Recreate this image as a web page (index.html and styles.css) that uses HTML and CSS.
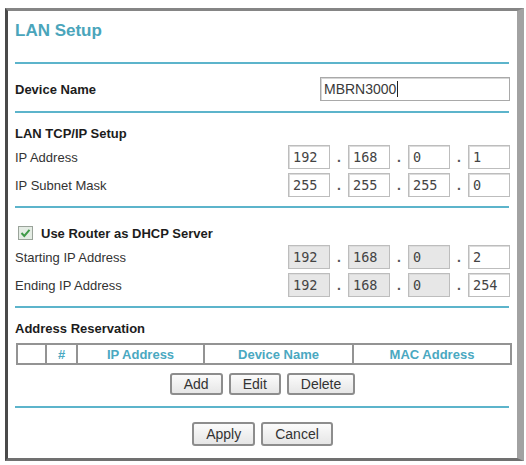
FILE: index.html
```html
<!DOCTYPE html>
<html>
<head>
<meta charset="utf-8">
<link rel="stylesheet" href="styles.css">
</head>
<body>
<div class="frame">
  <div class="title">LAN Setup</div>
  <div class="rule"></div>
  <div class="row device">
    <span class="bold">Device Name</span>
    <div class="textbox">MBRN3000<span class="caret"></span></div>
  </div>
  <div class="rule"></div>
  <div class="row head"><span class="bold">LAN TCP/IP Setup</span></div>
  <div class="row ip">
    <span class="label">IP Address</span>
    <div class="ipgroup">
      <span class="oct">192</span><span class="dot">.</span><span class="oct">168</span><span class="dot">.</span><span class="oct">0</span><span class="dot">.</span><span class="oct">1</span>
    </div>
  </div>
  <div class="row ip second">
    <span class="label">IP Subnet Mask</span>
    <div class="ipgroup">
      <span class="oct">255</span><span class="dot">.</span><span class="oct">255</span><span class="dot">.</span><span class="oct">255</span><span class="dot">.</span><span class="oct">0</span>
    </div>
  </div>
  <div class="rule r3"></div>
  <div class="row check">
    <svg class="cb" width="15" height="14" viewBox="0 0 15 14"><rect x="0.5" y="0.5" width="14" height="13" fill="#e4ece4" stroke="#9aa39a"/><path d="M3.5 7 L6.3 10 L11.5 3.8" fill="none" stroke="#3f9a48" stroke-width="2"/></svg>
    <span class="bold">Use Router as DHCP Server</span>
  </div>
  <div class="row ip">
    <span class="label">Starting IP Address</span>
    <div class="ipgroup">
      <span class="oct dis">192</span><span class="dot">.</span><span class="oct dis">168</span><span class="dot">.</span><span class="oct dis">0</span><span class="dot">.</span><span class="oct">2</span>
    </div>
  </div>
  <div class="row ip second">
    <span class="label">Ending IP Address</span>
    <div class="ipgroup">
      <span class="oct dis">192</span><span class="dot">.</span><span class="oct dis">168</span><span class="dot">.</span><span class="oct dis">0</span><span class="dot">.</span><span class="oct">254</span>
    </div>
  </div>
  <div class="rule r4"></div>
  <div class="row head2"><span class="bold">Address Reservation</span></div>
  <table class="res">
    <colgroup><col class="c0"><col class="c1"><col class="c2"><col class="c3"><col class="c4"></colgroup>
    <tr><th></th><th>#</th><th>IP Address</th><th>Device Name</th><th>MAC Address</th></tr>
  </table>
  <div class="btns small">
    <button class="btn">Add</button><button class="btn">Edit</button><button class="btn">Delete</button>
  </div>
  <div class="rule r5"></div>
  <div class="btns big">
    <button class="btn">Apply</button><button class="btn">Cancel</button>
  </div>
</div>
</body>
</html>
```
FILE: styles.css
```css
html, body {
  margin: 0;
  padding: 0;
  background: #ffffff;
}
body {
  font-family: "Liberation Sans", Arial, sans-serif;
  color: #2a2a2a;
}
.frame {
  margin: 8px 0 0 5px;
  width: 495px;
  padding: 0 7px 12px 7px;
  border-left: 3px solid #4a4a4a;
  border-top: 3px solid #858585;
  border-right: 7px solid #a2a2a2;
  border-bottom: 3px solid #707070;
}
.title {
  box-sizing: border-box;
  height: 51px;
  padding-top: 10px;
  line-height: 20px;
  font-size: 17px;
  font-weight: bold;
  color: #4aa5bb;
}
.rule {
  height: 2px;
  background: #5cb4cb;
  margin-right: 1px;
}
.row {
  display: flex;
  align-items: center;
  justify-content: space-between;
  font-size: 13px;
}
.bold {
  font-weight: bold;
  color: #1c1c1c;
}
.label {
  color: #333;
}
.device {
  box-sizing: border-box;
  height: 47px;
  padding-top: 3px;
}
.textbox {
  box-sizing: border-box;
  width: 190px;
  height: 24px;
  border: 1px solid #a9a9a9;
  box-shadow: inset 1px 1px 0 #d6d6d6;
  font-size: 14px;
  line-height: 22px;
  padding-left: 3px;
  color: #3a3a3a;
  display: flex;
  align-items: center;
}
.caret {
  display: inline-block;
  width: 1px;
  height: 16px;
  background: #222;
  margin-left: 1px;
}
.head {
  margin-top: 8px;
  height: 24px;
  justify-content: flex-start;
}
.ip {
  height: 24px;
}
.ip.second {
  margin-top: 4px;
}
.ipgroup {
  display: flex;
  align-items: center;
}
.oct {
  box-sizing: border-box;
  width: 42px;
  height: 24px;
  border: 1px solid #bdbdbd;
  box-shadow: inset 1px 1px 0 #dcdcdc;
  font-family: "DejaVu Sans Mono", "Liberation Mono", monospace;
  font-size: 13.5px;
  line-height: 22px;
  padding-left: 4px;
  color: #444;
  background: #fff;
}
.oct.dis {
  background: #e7e7e7;
}
.dot {
  width: 18px;
  text-align: center;
  font-size: 14px;
  font-weight: bold;
  color: #555;
  line-height: 24px;
}
.r3 {
  margin-top: 9px;
}
.check {
  margin-top: 13px;
  height: 24px;
  justify-content: flex-start;
}
.cb {
  margin-left: 3px;
  margin-right: 8px;
}
.r4 {
  margin-top: 9px;
}
.head2 {
  margin-top: 8px;
  height: 24px;
  justify-content: flex-start;
}
.res {
  margin-top: 3px;
  margin-left: 1px;
  width: 494px;
  border-collapse: collapse;
  table-layout: fixed;
  height: 22px;
}
.res th {
  border: 2px solid #939393;
  height: 18px;
  padding: 0;
  font-size: 13px;
  font-weight: bold;
  color: #4aa8c1;
  overflow: hidden;
  white-space: nowrap;
}
.res .c0 { width: 29px; }
.res .c1 { width: 31px; }
.res .c2 { width: 127px; }
.res .c3 { width: 149px; }
.res .c4 { width: 158px; }
.btns {
  display: flex;
  justify-content: center;
  gap: 6px;
}
.btns.small {
  margin-top: 8px;
}
.btns.big {
  margin-top: 14px;
}
.btn {
  box-sizing: border-box;
  font-family: "Liberation Sans", Arial, sans-serif;
  font-size: 14px;
  color: #333;
  padding: 0 12px;
  border: 2px solid #8d8d8d;
  border-radius: 3px;
  background: linear-gradient(#fbfbfb, #e6e6e6);
  margin: 0;
}
.small .btn {
  height: 22px;
}
.big .btn {
  height: 24px;
}
.r5 {
  margin-top: 11px;
}
```
